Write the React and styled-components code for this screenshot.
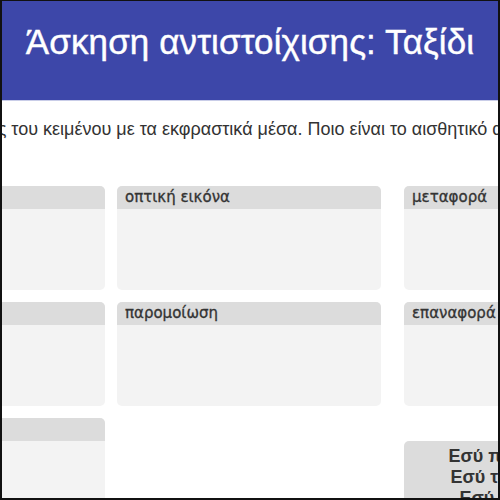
import React from "react";
import styled, { createGlobalStyle } from "styled-components";

const Global = createGlobalStyle`
  html, body { margin: 0; padding: 0; background: #fff; }
  body { font-family: "Liberation Sans", Arial, sans-serif; }
`;

const Frame = styled.div`
  width: 500px;
  height: 500px;
  box-sizing: border-box;
  border: 2px solid #111;
  border-top-width: 1px;
  overflow: hidden;
  background: #fff;
`;

const Header = styled.header`
  height: 100px;
  background: #3d47a9;
  display: flex;
  justify-content: center;
  padding-top: 21px;
  box-sizing: border-box;
  border-bottom: 1px solid #c9cde8;
`;

const Title = styled.h1`
  margin: 0;
  color: #fff;
  font-size: 35px;
  font-weight: 400;
  white-space: nowrap;
  line-height: 40px;
  letter-spacing: 0.1px;
  -webkit-text-stroke: 0.4px #fff;
`;

const Intro = styled.p`
  margin: 17px 0 0 -193px;
  font-size: 18px;
  line-height: 22px;
  color: #333;
  white-space: nowrap;
`;

const Board = styled.div`
  display: grid;
  grid-template-columns: 264px 264px 264px;
  column-gap: 12px;
  row-gap: 12px;
  margin: 46px 0 0 -161px;
  width: max-content;
`;

const Slot = styled.div`
  height: 104px;
  border-radius: 5px;
  background: #f3f3f3;
  overflow: hidden;
  margin-left: ${(p) => (p.$side ? "11px" : "0")};
`;

const SlotLabel = styled.div`
  height: 23px;
  background: #dcdcdc;
  padding: 0 8px;
  font-family: "DejaVu Sans", Verdana, sans-serif;
  font-size: 15px;
  line-height: 23px;
  color: #333;
  white-space: nowrap;
  -webkit-text-stroke: 0.3px #333;
`;

const Empty = styled.div``;

const Piece = styled.div`
  margin: 23px 0 0 11px;
  background: #dcdcdc;
  border-radius: 5px;
  padding: 5px 8px;
  text-align: center;
  font-size: 18px;
  font-weight: 700;
  line-height: 21px;
  color: #333;
`;

const rows = [
  ["προσωποποίηση", "οπτική εικόνα", "μεταφορά"],
  ["ασύνδετο σχήμα", "παρομοίωση", "επαναφορά"],
];

export default function App() {
  return (
    <Frame>
      <Global />
      <Header>
        <Title>Άσκηση αντιστοίχισης: Ταξίδι</Title>
      </Header>
      <Intro>
        Αντιστοιχίστε τις φράσεις του κειμένου με τα εκφραστικά μέσα. Ποιο είναι το αισθητικό αποτέλεσμα;
      </Intro>
      <Board>
        {rows.map((row) =>
          row.map((label, i) => (
            <Slot key={label} $side={i === 2}>
              <SlotLabel>{label}</SlotLabel>
            </Slot>
          ))
        )}
        <Slot>
          <SlotLabel>εικόνα</SlotLabel>
        </Slot>
        <Empty />
        <Piece>
          Εσύ που ταξιδεύεις
          <br />
          Εσύ της θάλασσας
          <br />
          Εσύ στα κύματα,
        </Piece>
      </Board>
    </Frame>
  );
}
